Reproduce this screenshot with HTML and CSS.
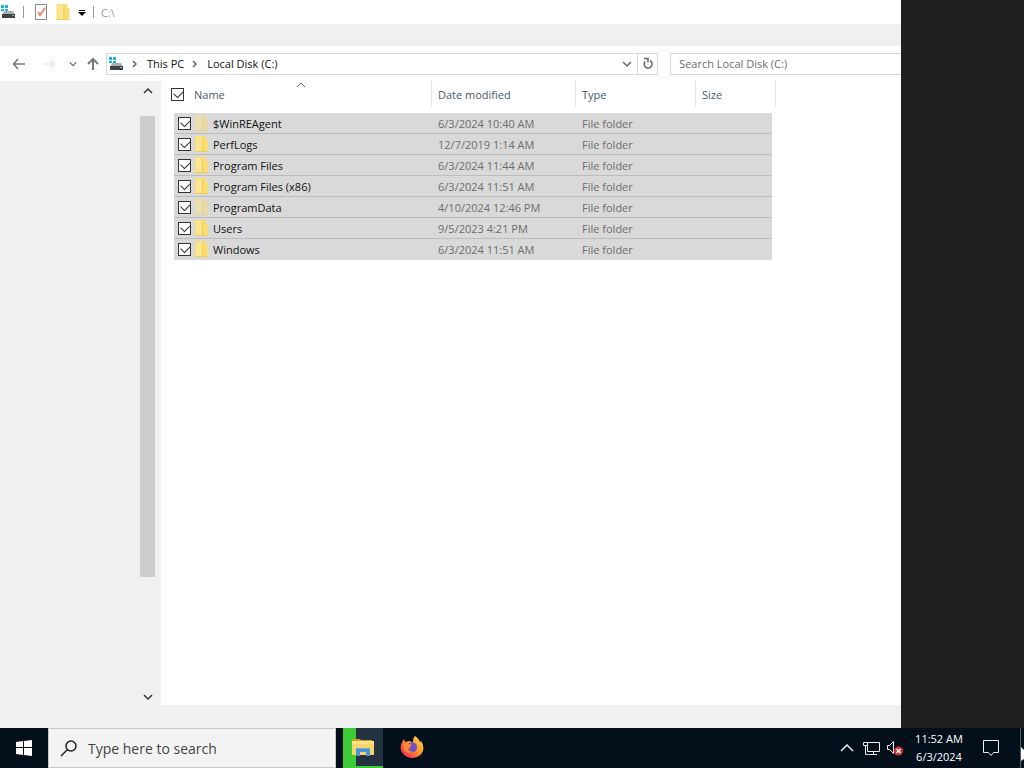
FILE: index.html
```html
<!DOCTYPE html>
<html lang="en">
<head>
    <meta charset="UTF-8">
    <meta name="viewport" content="width=device-width, initial-scale=1.0">
    <title>C:\</title>
    <link rel="stylesheet" href="styles.css">
</head>
<body>
    <!-- Shared icons -->
    <svg class="defs" width="0" height="0" aria-hidden="true">
        <symbol id="drive" viewBox="0 0 16 16">
            <path fill="#19b5e8" d="M1 1h3v3H1zM5 1h3v3H5zM1 5h3v2H1zM5 5h3v2H5z"/>
            <path fill="#a9adb0" d="M4 7h9l2 4H2z"/>
            <path fill="#3f4346" d="M2 10h13v4H2z"/>
            <path fill="#6fd0c0" d="M12 11h2v1h-2z"/>
        </symbol>
        <symbol id="folder" viewBox="0 0 13 16">
            <path fill="#f9dc72" d="M0 0h11v4h2v12H0z"/>
            <path fill="#fbe68e" d="M1 1h6v14H1z"/>
            <path fill="#f0cb5c" d="M7 2h1v13H7zM0 15h13v1H0z"/>
        </symbol>
        <symbol id="down" viewBox="0 0 10 10">
            <path fill="none" stroke="currentColor" stroke-width="1.500" d="M1 3l4 4 4-4"/>
        </symbol>
        <symbol id="up" viewBox="0 0 10 10">
            <path fill="none" stroke="currentColor" stroke-width="1.500" d="M1 7l4-4 4 4"/>
        </symbol>
        <symbol id="right" viewBox="0 0 10 10">
            <path fill="none" stroke="currentColor" stroke-width="1.500" d="M3 2l3 3-3 3"/>
        </symbol>
    </svg>

    <div class="desktop">
        <div class="window">
            <div class="titlebar">
                <svg class="icon" width="16" height="16"><use href="#drive"/></svg>
                <span class="divider"></span>
                <button class="quick" aria-label="Properties">
                    <svg width="14" height="16" viewBox="0 0 14 16">
                        <path fill="#fff" stroke="#8a8a8a" d="M1.500.5h11v15h-11z"/>
                        <path fill="none" stroke="#e58a70" stroke-width="2" d="M4 8l2 3 5-7"/>
                    </svg>
                </button>
                <button class="quick" aria-label="New folder"><svg width="14" height="16"><use href="#folder"/></svg></button>
                <button class="quick customize" aria-label="Customize">
                    <svg width="8" height="8" viewBox="0 0 8 8"><path d="M1 2h6v1H1zM0 4h8L4 8z"/></svg>
                </button>
                <span class="divider"></span>
                <span class="title">C:\</span>
            </div>
            <div class="ribbon"></div>

            <div class="navbar">
                <button class="back" aria-label="Back">
                    <svg width="14" height="12" viewBox="0 0 14 12"><path fill="none" stroke="#777" stroke-width="1.500" d="M13 6H2M6 1L1.500 6 6 11"/></svg>
                </button>
                <button class="forward" aria-label="Forward">
                    <svg width="12" height="12" viewBox="0 0 12 12"><path fill="none" stroke="#d9d9d9" stroke-width="1" d="M0 6h11M7 2l4 4-4 4"/></svg>
                </button>
                <button class="recent" aria-label="Recent locations"><svg width="8" height="8"><use href="#down"/></svg></button>
                <button class="parent" aria-label="Up">
                    <svg width="12" height="14" viewBox="0 0 12 14"><path fill="none" stroke="#777" stroke-width="2" d="M6 13V2M1 7l5-5 5 5"/></svg>
                </button>
                <div class="address">
                    <svg class="icon" width="16" height="16"><use href="#drive"/></svg>
                    <svg class="crumb-arrow" width="10" height="10"><use href="#right"/></svg>
                    <a href="#">This PC</a>
                    <svg class="crumb-arrow" width="10" height="10"><use href="#right"/></svg>
                    <a href="#">Local Disk (C:)</a>
                    <button class="history" aria-label="Previous locations"><svg width="10" height="10"><use href="#down"/></svg></button>
                    <button class="refresh" aria-label="Refresh">
                        <svg width="12" height="13" viewBox="0 0 12 13"><path fill="none" stroke="#666" stroke-width="1.500" d="M8 3.500a4 4 0 1 1-5 1M2 1.500h4v4"/></svg>
                    </button>
                </div>
                <input class="search" type="text" placeholder="Search Local Disk (C:)" aria-label="Search Local Disk (C:)">
            </div>

            <div class="main">
                <div class="tree">
                    <div class="scrollbar">
                        <svg width="10" height="10"><use href="#up"/></svg>
                        <div class="track"><div class="thumb"></div></div>
                        <svg width="10" height="10"><use href="#down"/></svg>
                    </div>
                </div>
                <div class="files">
                    <table>
                        <colgroup>
                            <col class="col-gutter"><col class="col-name"><col class="col-date"><col class="col-type"><col class="col-size"><col class="col-end">
                        </colgroup>
                        <thead>
                            <tr>
                                <th colspan="2">
                                    <label><input type="checkbox" checked>Name</label>
                                    <svg class="sort" width="10" height="6" viewBox="0 0 10 6"><path fill="none" stroke="#666" d="M1 5l4-4 4 4"/></svg>
                                </th>
                                <th>Date modified</th>
                                <th>Type</th>
                                <th colspan="2">Size</th>
                            </tr>
                        </thead>
                        <tbody>
                            <tr class="hidden-item">
                                <td></td>
                                <td><label><input type="checkbox" checked><svg width="13" height="16"><use href="#folder"/></svg>$WinREAgent</label></td>
                                <td>6/3/2024 10:40 AM</td><td>File folder</td><td></td><td></td>
                            </tr>
                            <tr>
                                <td></td>
                                <td><label><input type="checkbox" checked><svg width="13" height="16"><use href="#folder"/></svg>PerfLogs</label></td>
                                <td>12/7/2019 1:14 AM</td><td>File folder</td><td></td><td></td>
                            </tr>
                            <tr>
                                <td></td>
                                <td><label><input type="checkbox" checked><svg width="13" height="16"><use href="#folder"/></svg>Program Files</label></td>
                                <td>6/3/2024 11:44 AM</td><td>File folder</td><td></td><td></td>
                            </tr>
                            <tr>
                                <td></td>
                                <td><label><input type="checkbox" checked><svg width="13" height="16"><use href="#folder"/></svg>Program Files (x86)</label></td>
                                <td>6/3/2024 11:51 AM</td><td>File folder</td><td></td><td></td>
                            </tr>
                            <tr class="hidden-item">
                                <td></td>
                                <td><label><input type="checkbox" checked><svg width="13" height="16"><use href="#folder"/></svg>ProgramData</label></td>
                                <td>4/10/2024 12:46 PM</td><td>File folder</td><td></td><td></td>
                            </tr>
                            <tr>
                                <td></td>
                                <td><label><input type="checkbox" checked><svg width="13" height="16"><use href="#folder"/></svg>Users</label></td>
                                <td>9/5/2023 4:21 PM</td><td>File folder</td><td></td><td></td>
                            </tr>
                            <tr>
                                <td></td>
                                <td><label><input type="checkbox" checked><svg width="13" height="16"><use href="#folder"/></svg>Windows</label></td>
                                <td>6/3/2024 11:51 AM</td><td>File folder</td><td></td><td></td>
                            </tr>
                        </tbody>
                    </table>
                </div>
            </div>
            <div class="statusbar"></div>
        </div>
        <div class="wallpaper"></div>
    </div>

    <div class="taskbar">
        <button class="start" aria-label="Start">
            <svg width="16" height="16" viewBox="0 0 16 16"><path fill="#fff" d="M0 2l7-1v6H0zM8 1l8-1v7H8zM0 8h7v7l-7-1zM8 8h8v8l-8-1z"/></svg>
        </button>
        <label class="task-search">
            <svg width="18" height="18" viewBox="0 0 18 18"><g fill="none" stroke="#222" stroke-width="1.500"><circle cx="11" cy="7" r="5"/><path d="M7.500 10.500L1 17"/></g></svg>
            <input type="text" placeholder="Type here to search" aria-label="Type here to search">
        </label>
        <button class="app explorer" aria-label="File Explorer">
            <svg width="22" height="18" viewBox="0 0 22 18">
                <path fill="#d99a22" d="M0 1h8l1 1h11v4H0z"/>
                <path fill="#f8d568" d="M0 3h22v14H0z"/>
                <path fill="#fbe08a" d="M0 3h22v3H0z"/>
                <path fill="#4a94d0" d="M4 10h14v8h-4v-4H8v4H4z"/>
                <path fill="#64b1ea" d="M4 10h14v1H4z"/>
            </svg>
        </button>
        <button class="app" aria-label="Firefox">
            <svg width="24" height="24" viewBox="0 0 24 24">
                <defs>
                    <linearGradient id="fox" x1="1" y1="0" x2="0" y2="1">
                        <stop offset="0" stop-color="#ffe14a"/><stop offset=".45" stop-color="#ff9a2e"/><stop offset=".75" stop-color="#ff4a4a"/><stop offset="1" stop-color="#e3247a"/>
                    </linearGradient>
                </defs>
                <path fill="url(#fox)" d="M15 0c3 2 4 4 5 6l1-1c2 3 3 6 2 10a11.500 10.500 0 0 1-22-1C0 10 2 6 4 3l1 3 4-1c2 0 3 1 4 2 0-3 0-5 2-7z"/>
                <path fill="#7150c8" d="M8 8c2-2 6-2 8 0 2 3 1 7-2 8s-6-1-6-3l3-1-3-2z"/>
                <path fill="#ff8a2b" d="M4 7c2-1 4 0 5 1l3 1-2 2-2 1c0 3 3 4 5 3-3 3-8 2-9-2z"/>
            </svg>
        </button>
        <div class="tray">
            <button class="tray-up" aria-label="Show hidden icons">
                <svg width="14" height="8" viewBox="0 0 14 8"><path fill="none" stroke="#eee" stroke-width="1.500" d="M1 7l6-6 6 6"/></svg>
            </button>
            <button aria-label="Network">
                <svg width="17" height="15" viewBox="0 0 17 15"><path fill="none" stroke="#eee" d="M4.500 1.500h12v9h-12zM2.500 4.500v9h3M10.500 10.500v3M6 13.500h8"/><path fill="#03101c" stroke="#eee" d="M.5 1.500h4v3h-4z"/></svg>
            </button>
            <button class="volume" aria-label="Volume">
                <svg width="16" height="16" viewBox="0 0 16 16">
                    <path fill="none" stroke="#eee" d="M.5 5.500h2l4-4v12l-4-4h-2z"/>
                    <circle cx="11.500" cy="11" r="4.500" fill="#d8302f"/>
                    <path stroke="#fff" stroke-width="1.500" d="M9.500 9l4 4M13.500 9l-4 4"/>
                </svg>
            </button>
            <div class="clock"><span>11:52 AM</span><span>6/3/2024</span></div>
            <button class="notify" aria-label="Notifications">
                <svg width="18" height="18" viewBox="0 0 18 18"><path fill="none" stroke="#eee" d="M1.500 1.500h15v12h-5l-2.500 3-2.500-3h-5z"/></svg>
            </button>
            <div class="show-desktop"></div>
        </div>
        <svg class="pointer" width="4" height="16" viewBox="0 0 4 16"><path fill="#fff" d="M1 1l3 3v9l-3 2z"/></svg>
    </div>
</body>
</html>
```
FILE: styles.css
```css
* { box-sizing: border-box; }
body { margin: 0; height: 100vh; display: flex; flex-direction: column; overflow: hidden; position: relative; font-family: "Open Sans", "Noto Sans", sans-serif; font-size: 11px; color: #111; background: #1f1f1f; }
button { border: 0; padding: 0; background: none; display: flex; align-items: center; justify-content: center; color: #666; flex: none; }
svg { flex: none; display: block; }
a { color: inherit; text-decoration: none; white-space: nowrap; }
.defs { position: absolute; }

.desktop { flex: 1; display: flex; min-height: 0; }
.window { flex: 1; min-width: 0; display: flex; flex-direction: column; background: #fff; }
.wallpaper { width: 12%; background: #1f1f1f; }

.titlebar { height: 24px; display: flex; align-items: center; }
.titlebar .divider { width: 1px; height: 12px; margin: 0 10px 0 7px; background: #999; }
.titlebar .quick { margin-right: 8px; }
.titlebar .customize { margin-right: 0; }
.titlebar .title { color: #999; }
.titlebar .customize + .divider { margin-right: 7px; }
.ribbon { height: 22px; background: #f0f0f0; }

.navbar { height: 35px; display: flex; align-items: center; padding-left: 12px; }
.back { width: 14px; margin-right: 16px; }
.forward { width: 14px; margin-right: 12px; }
.recent { width: 9px; margin-right: 9px; }
.parent { width: 14px; margin-right: 6px; }
.address { flex: 1; height: 22px; display: flex; align-items: center; border: 1px solid #d9d9d9; padding-left: 1px; }
.crumb-arrow { margin: 0 7px 0 6px; color: #666; }
.history { width: 20px; height: 20px; margin-left: auto; }
.refresh { width: 20px; height: 20px; border-left: 1px solid #d9d9d9; }
.search { width: 231px; height: 22px; margin-left: 12px; border: 1px solid #d9d9d9; border-right: 0; padding: 0 8px; font: inherit; }
.search::placeholder { color: #6d6d6d; opacity: 1; }

.main { flex: 1; min-height: 0; display: flex; }
.tree { width: 161px; background: #f0f0f0; display: flex; justify-content: flex-end; padding-right: 6px; }
.scrollbar { width: 15px; display: flex; flex-direction: column; align-items: center; padding: 5px 0 3px; color: #333; }
.track { flex: 1; width: 100%; padding: 20px 0 0; }
.thumb { height: 80%; background: #cdcdcd; }
.files { flex: 1; min-width: 0; }

table { width: 615px; table-layout: fixed; border-collapse: separate; border-spacing: 0; }
.col-gutter { width: 13px; }
.col-name { width: 258px; }
.col-date { width: 144px; }
.col-type { width: 120px; }
.col-size { width: 76px; }
.col-end { width: 4px; }
th { height: 26px; padding: 0 6px; border-right: 1px solid #e5e5e5; text-align: left; font-weight: normal; color: #4c5a67; position: relative; }
th:first-child { padding-left: 10px; }
th label { display: flex; align-items: center; gap: 10px; }
.sort { position: absolute; top: 1px; left: 50%; }
tbody::before { content: ""; display: block; height: 6px; }
td { height: 21px; padding: 0 6px; background: #d9d9d9; border-bottom: 1px solid #bcbcbc; color: #6d6d6d; white-space: nowrap; }
tr:last-child td { border-color: #d9d9d9; }
td:first-child, td:last-child { background: none; border: 0; padding: 0; }
td:nth-child(2) { padding: 0 4px; color: #111; }
td label { display: flex; align-items: center; }
td label svg { margin: 0 5px 0 4px; }
.hidden-item svg { opacity: 0.5; }
input[type="checkbox"] { appearance: none; width: 13px; height: 13px; margin: 0; border: 1px solid #333; background: #fff; position: relative; }
input[type="checkbox"]:checked::after { content: ""; position: absolute; left: 2px; top: 1px; width: 8px; height: 5px; border-left: 1px solid #333; border-bottom: 1px solid #333; transform: rotate(-45deg); }

.statusbar { height: 23px; background: #f0f0f0; }

.taskbar { height: 40px; display: flex; background: #03101c; position: relative; }
.start { width: 48px; }
.task-search { width: 288px; display: flex; align-items: center; gap: 10px; padding-left: 11px; background: #f3f3f3; border: 1px solid #c4c8ca; margin-right: 7px; }
.task-search input { flex: 1; min-width: 0; border: 0; padding: 0; background: none; font: inherit; font-size: 14px; }
.task-search input::placeholder { color: #444; opacity: 1; }
.app { width: 40px; margin-right: 9px; }
.explorer { background: linear-gradient(to right, #3ccb36 13px, #22333f 13px); border-bottom: 2px solid #3ccb36; }
.tray { margin-left: auto; display: flex; align-items: center; }
.tray button { margin-right: 7px; }
.tray .tray-up { margin-right: 9px; }
.clock { width: 64px; display: flex; flex-direction: column; align-items: center; line-height: 18px; color: #fff; margin-right: 11px; }
.tray .volume { margin-right: 4px; }
.tray .notify { margin-right: 20px; }
.show-desktop { width: 4px; height: 40px; border-left: 1px solid #56606a; }
.pointer { position: absolute; right: 0; bottom: 6px; }
```
